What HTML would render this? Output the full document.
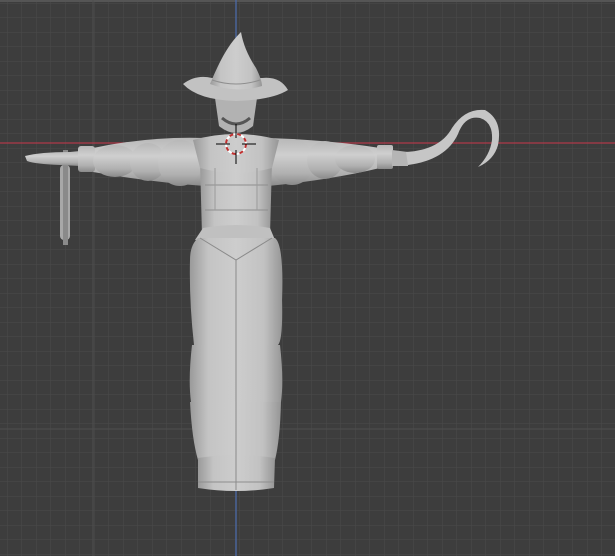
<!DOCTYPE html>
<html><head><style>
html,body{margin:0;padding:0;background:#3d3d3d;width:615px;height:556px;overflow:hidden}
svg{display:block}
</style></head><body>
<svg width="615" height="556" viewBox="0 0 615 556" xmlns="http://www.w3.org/2000/svg">
<defs>
<pattern id="g" x="7" y="3" width="14.5" height="14.5" patternUnits="userSpaceOnUse">
<path d="M0 0H14.5M0 0V14.5" stroke="#4a4a4a" stroke-width="1" fill="none"/>
</pattern>
<linearGradient id="b" x1="0" x2="1" y1="0" y2="0">
<stop offset="0" stop-color="#9a9a9a"/><stop offset=".2" stop-color="#c4c4c4"/><stop offset=".5" stop-color="#cdcdcd"/><stop offset=".8" stop-color="#c2c2c2"/><stop offset="1" stop-color="#969696"/>
</linearGradient>
<linearGradient id="a" x1="0" x2="0" y1="0" y2="1">
<stop offset="0" stop-color="#b8b8b8"/><stop offset=".35" stop-color="#cfcfcf"/><stop offset=".75" stop-color="#b0b0b0"/><stop offset="1" stop-color="#8a8a8a"/>
</linearGradient>
</defs>
<rect width="615" height="556" fill="#3d3d3d"/>
<rect width="615" height="556" fill="url(#g)"/>
<rect width="615" height="2" fill="#555"/>
<line x1="93" y1="0" x2="93" y2="556" stroke="#4e4e4e"/>
<line x1="0" y1="429" x2="615" y2="429" stroke="#4e4e4e"/>
<line x1="0" y1="143" x2="615" y2="143" stroke="#b03a4a" stroke-width="1.3"/>
<line x1="236" y1="0" x2="236" y2="556" stroke="#4b6aa8" stroke-width="1.3"/>

<rect x="60" y="165" width="10" height="75" rx="4" fill="#a8a8a8"/>
<rect x="63" y="150" width="5" height="95" fill="#8a8a8a"/>
<path d="M25 156 Q40 152 70 152 L80 151 L80 166 L60 165 Q35 164 27 161 Z" fill="url(#a)"/>
<path d="M93 148 Q150 136 205 138 L205 186 Q150 182 93 172 Z" fill="url(#a)"/>
<rect x="78" y="146" width="17" height="26" rx="3" fill="url(#a)"/>
<ellipse cx="115" cy="161" rx="22" ry="16" fill="url(#a)"/>
<ellipse cx="148" cy="162" rx="18" ry="19" fill="url(#a)"/>
<ellipse cx="180" cy="163" rx="22" ry="23" fill="url(#a)"/>
<path d="M268 138 Q330 140 380 148 L380 168 Q330 180 268 186 Z" fill="url(#a)"/>
<ellipse cx="292" cy="162" rx="22" ry="23" fill="url(#a)"/>
<ellipse cx="325" cy="160" rx="18" ry="19" fill="url(#a)"/>
<ellipse cx="355" cy="159" rx="20" ry="14" fill="url(#a)"/>
<rect x="377" y="145" width="16" height="24" rx="2" fill="url(#a)"/>
<path d="M392 150 L408 152 L408 166 L392 166 Z" fill="#b5b5b5"/>
<path d="M406 152 Q440 150 452 128 Q465 108 485 110 Q503 120 498 145 Q494 160 478 167 Q490 155 492 140 Q493 122 480 118 Q465 115 458 134 Q446 160 408 165 Z" fill="#c6c6c6"/>
<path d="M200 162 L272 162 L270 235 L202 235 Z" fill="url(#b)"/>
<path d="M193 140 Q236 128 279 140 L272 168 Q236 178 200 168 Z" fill="url(#b)"/>
<path d="M205 185 H268 M205 210 H268" stroke="#8e8e8e" fill="none"/>
<path d="M215 168 V210 M257 168 V210" stroke="#9a9a9a" fill="none"/>
<path d="M203 228 Q236 222 270 228 L275 240 L195 240 Z" fill="#c0c0c0"/>
<path d="M198 238 L275 238 Q284 245 282 300 Q283 340 278 345 Q236 352 194 345 Q189 300 190 260 Q190 245 198 238 Z" fill="url(#b)"/>
<path d="M200 238 L236 260 L272 238" stroke="#8a8a8a" fill="none"/>
<line x1="236" y1="260" x2="236" y2="490" stroke="#8a8a8a"/>
<path d="M192 345 L280 345 Q284 380 281 402 L191 402 Q188 380 192 345 Z" fill="url(#b)"/>
<path d="M190 402 L281 402 Q280 440 275 460 L198 460 Q192 440 190 402 Z" fill="url(#b)"/>
<path d="M198 458 Q236 452 275 458 L274 488 Q236 494 198 488 Z" fill="url(#b)"/>
<line x1="198" y1="482" x2="274" y2="482" stroke="#8e8e8e"/>
<line x1="236" y1="345" x2="236" y2="490" stroke="#8a8a8a"/>
<path d="M215 98 Q236 94 257 98 L253 126 Q236 140 219 126 Z" fill="#b2b2b2"/>
<path d="M222 118 Q236 130 250 118" stroke="#555" stroke-width="3" fill="none"/>
<path d="M183 84 Q196 74 212 78 L262 78 Q280 76 288 90 Q272 100 236 101 Q198 100 183 84 Z" fill="#c2c2c2"/>
<path d="M210 84 Q220 60 228 48 Q233 40 241 32 Q244 50 256 68 Q262 80 262 86 Q236 94 210 84 Z" fill="url(#b)"/>
<path d="M212 80 Q236 88 260 80" stroke="#8e8e8e" fill="none"/>
<circle cx="236" cy="144" r="10" fill="none" stroke="#fff" stroke-width="2"/>
<circle cx="236" cy="144" r="10" fill="none" stroke="#c03030" stroke-width="2" stroke-dasharray="4 4"/>
<path d="M216 144H230M242 144H256M236 124V138M236 150V164" stroke="#000" stroke-width="1"/>
</svg>
</body></html>
